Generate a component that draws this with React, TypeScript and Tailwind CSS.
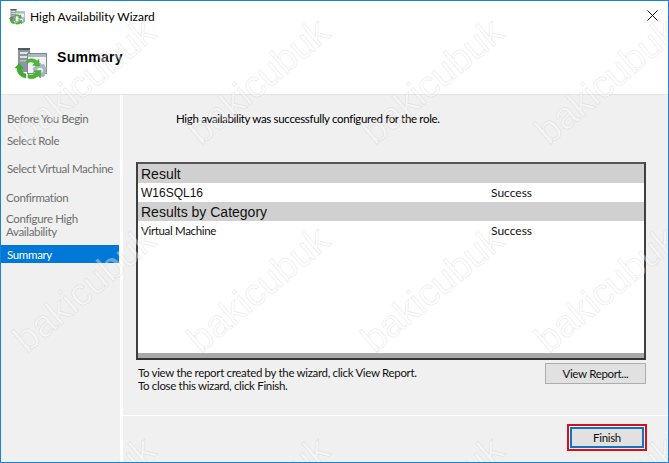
import React from "react";

function Mark({ x, y }: { x: number; y: number }) {
  return (
    <div
      className="absolute w-[200px] h-[40px] flex items-center justify-center text-[38px] leading-none tracking-normal font-['Liberation_Sans',sans-serif] text-white/40 [-webkit-text-stroke:1px_rgba(120,120,120,0.13)] -rotate-[40deg] whitespace-nowrap"
      style={{ left: x - 100, top: y - 20 }}
    >
      bakicubuk
    </div>
  );
}

const marks = [
  [83, 80], [257, 80], [431, 80], [605, 80],
  [83, 288], [257, 288], [431, 288], [605, 288],
  [83, 498], [257, 498], [431, 498], [605, 498],
];

function Icon({ size }: { size: number }) {
  return (
    <svg width={size} height={size} viewBox="0 0 32 32" className="shrink-0 block">
      <rect x="3" y="0" width="12" height="24" fill="#8a959c" />
      <rect x="3" y="0" width="12" height="2" fill="#4f5a61" />
      <rect x="5" y="4" width="8" height="2" fill="#dfe4e7" />
      <rect x="5" y="8" width="8" height="2" fill="#dfe4e7" />
      <rect x="5" y="12" width="8" height="1.5" fill="#b9c2c7" />
      <rect x="12.5" y="5.5" width="19" height="20" fill="#f1f4f5" stroke="#7c8990" />
      <rect x="13" y="6" width="18" height="3" fill="#aeb9bf" />
      <path d="M25 15l1.500 2 2.500-.5.700 2.500 2.300 1.200-1 2.300 1 2.300-2.300 1.200-.7 2.500-2.500-.5L25 30l-1.500-2-2.500.5-.7-2.500-2.300-1.200 1-2.300-1-2.300 2.300-1.200.7-2.500 2.500.5z" fill="#a7b9c4" stroke="#7f929e" strokeWidth=".5" />
      <circle cx="25" cy="22.500" r="2.800" fill="#eef2f4" />
      <path d="M11 13c3-3 8-3 11 0l1.800-1.800.7 6.800-6.800-.7 1.800-1.800c-2-2-5-2-6.800-.4z" fill="#4cbb32" stroke="#2f8a1c" strokeWidth=".4" />
      <path d="M0 20l4-4.500 4 4.500H5.800c.2 3 2 5 5.200 6v4C5 29 2 25.500 2 20z" fill="#3fae2a" stroke="#2f8a1c" strokeWidth=".4" />
      <path d="M13 30c4 1.500 8 .5 10.500-2.500l1.800 1.800.7-7-6.800.7 1.800 1.800c-2 2-4.500 2.700-8 1.700z" fill="#47b52e" stroke="#2f8a1c" strokeWidth=".4" />
    </svg>
  );
}

function NavItem({ label, className = "" }: { label: React.ReactNode; className?: string }) {
  return <div className={`pl-[6px] text-[#6e6e6e] ${className}`}>{label}</div>;
}

export default function App() {
  return (
    <div className="relative w-[669px] h-[463px] overflow-hidden bg-white border border-[#1883d7] font-['Lato','Noto_Sans',sans-serif] text-[11.5px] tracking-[-0.33px] leading-[13px] text-[#111]">
      <div className="flex items-center h-[31px] pl-[8px] pr-[10px]">
        <Icon size={16} />
        <span className="ml-[5px] text-black text-[12px] tracking-normal">High Availability Wizard</span>
        <svg width="11" height="11" viewBox="0 0 11 11" className="ml-auto -mt-[3px]">
          <path d="M.5.5l10 10M10.500.5l-10 10" stroke="#111" strokeWidth="1" fill="none" />
        </svg>
      </div>
      <div className="flex items-start h-[63px] pl-[14px] border-b border-[#e4e4e4]">
        <div className="mt-[16px]"><Icon size={32} /></div>
        <span className="ml-[10px] mt-[18px] text-[14px] leading-[14px] tracking-[0.3px] font-bold text-black font-['Liberation_Sans',sans-serif]">Summary</span>
      </div>
      <div className="flex h-[367px] bg-[#f0f0f0]">
        <div className="w-[119px] shrink-0 pt-[17px]">
          <NavItem label="Before You Begin" />
          <NavItem label="Select Role" className="mt-[9px]" />
          <NavItem label="Select Virtual Machine" className="mt-[15px] whitespace-nowrap" />
          <NavItem label="Confirmation" className="mt-[16px] !pl-[5px]" />
          <NavItem label={<>Configure High<br />Availability</>} className="mt-[8px] !pl-[5px]" />
          <div className="mt-[7px] h-[18px] mr-[1px] pl-[6px] bg-[#0078d7] text-white leading-[20px]">Summary</div>
        </div>
        <div className="w-[3px] shrink-0 bg-white" />
        <div className="flex-1 flex flex-col min-w-0">
          <div className="h-[320px] shrink-0 pl-[13px] pr-[22px]">
            <div className="pl-[40px] pt-[17px] h-[67px] text-black">High availability was successfully configured for the role.</div>
            <div className="h-[198px] border-2 border-[#3f3f3f] border-t-[#555555] border-b-[#333333] bg-white flex flex-col">
              <div className="h-[19px] bg-[#d0d0d0] pl-[3px] font-['Liberation_Sans',sans-serif] text-[14px] tracking-normal leading-[21px]">Result</div>
              <div className="h-[19px] flex pl-[3px] leading-[20px]">
                <span className="w-[350px] text-[12px] tracking-normal font-['Liberation_Sans',sans-serif]">W16SQL16</span><span className="text-[12px] tracking-normal">Success</span>
              </div>
              <div className="h-[19px] bg-[#d0d0d0] pl-[3px] font-['Liberation_Sans',sans-serif] text-[14px] tracking-normal leading-[21px]">Results by Category</div>
              <div className="h-[19px] flex pl-[3px] leading-[20px]">
                <span className="w-[350px]">Virtual Machine</span><span className="text-[12px] tracking-normal">Success</span>
              </div>
              <div className="flex-1" />
              <div className="h-[5px] bg-[#a9a9a9]" />
            </div>
            <div className="flex items-start justify-between pl-[2px]">
              <div className="pt-[6px]">
                To view the report created by the wizard, click View Report.<br />
                To close this wizard, click Finish.
              </div>
              <div className="mt-[3px] w-[101px] h-[21px] border border-[#adadad] bg-[#e1e1e1] flex items-center justify-center">View Report...</div>
            </div>
          </div>
          <div className="flex-1 border-t border-white flex items-start justify-end pr-[21px] pt-[8px]">
            <div className="w-[80px] h-[27px] border-2 border-[#d2131c] flex items-center justify-center">
              <div className="w-[74px] h-[21px] border-2 border-[#0f74c4] bg-[#e1e1e1] flex items-center justify-center">Finish</div>
            </div>
          </div>
        </div>
      </div>
      <div className="absolute inset-0 pointer-events-none">
        {marks.map(([x, y], i) => <Mark key={i} x={x} y={y} />)}
      </div>
    </div>
  );
}
